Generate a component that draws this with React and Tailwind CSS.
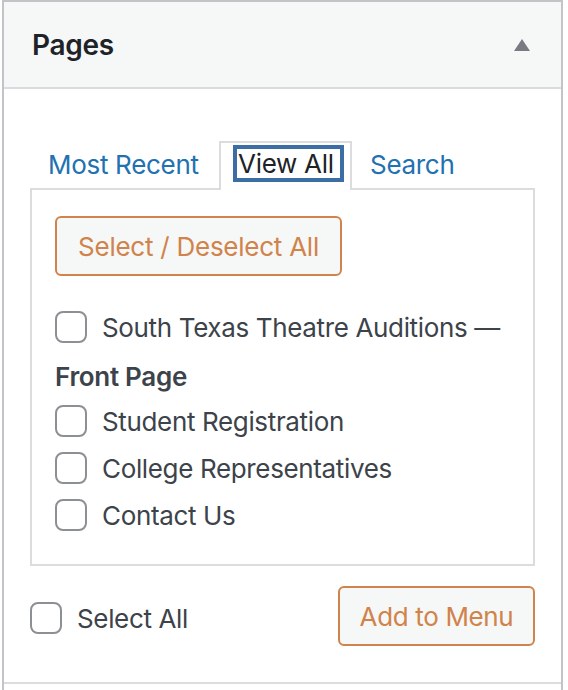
import React from "react";

function Checkbox({ className = "" }) {
  return (
    <span
      className={`block h-[32px] w-[32px] shrink-0 rounded-[8px] border-2 border-[#8c8f94] bg-white ${className}`}
    />
  );
}

function Row({ label, className = "" }) {
  return (
    <div className={`flex h-[32px] items-center ${className}`}>
      <Checkbox />
      <span className="ml-[15px] mt-[1px] whitespace-nowrap text-[26px] leading-none tracking-[-0.35px] text-[#3c434a]">
        {label}
      </span>
    </div>
  );
}

export default function App() {
  return (
    <div className="h-[690px] w-[568px] overflow-hidden bg-white font-[Inter,sans-serif]">
      <div className="ml-[2px] w-[561px] border-x-2 border-t-2 border-[#c3c4c7]">
        {/* Header */}
        <div className="flex h-[87px] items-center justify-between border-b-2 border-[#dcdcde] bg-[#f6f7f7] pl-[28px] pr-[31px]">
          <h2 className="text-[28px] font-semibold leading-normal tracking-[-0.3px] text-[#1d2327]">Pages</h2>
          <svg width="16" height="12" viewBox="0 0 16 12" aria-hidden="true">
            <polygon points="8,0 16,12 0,12" fill="#787c82" />
          </svg>
        </div>

        {/* Body */}
        <div className="border-b-2 border-[#dcdcde] px-[26px] pb-[36px] pt-[52px]">
          {/* Tabs */}
          <div className="flex items-start">
            <div className="w-[189px] pl-[18px] pt-[9px] text-[26px] leading-[29px] tracking-[-0.3px] text-[#2271b1]">
              Most Recent
            </div>
            <div className="relative z-10 -mb-[2px] h-[49px] w-[133px] border-x-2 border-t-2 border-[#dcdcde] bg-white pl-[12px] pr-[6px] pt-[2px]">
              <div className="h-[37px] w-[111px] whitespace-nowrap border-4 border-[#3b6ea5] pl-[1px] text-[26px] leading-[30px] tracking-[-0.3px] text-[#1d2327]">
                View All
              </div>
            </div>
            <div className="pl-[18px] pt-[9px] text-[26px] leading-[29px] tracking-[-0.3px] text-[#2271b1]">Search</div>
          </div>

          {/* Panel */}
          <div className="border-2 border-[#dcdcde] px-[23px] pb-[33px] pt-[26px]">
            <div className="flex h-[60px] w-[287px] items-center justify-center rounded-[6px] border-2 border-[#d0834a] bg-[#f6f7f7] text-[26px] tracking-[-0.25px] text-[#d0834a]">
              Select / Deselect All
            </div>
            <div className="mt-[35px]">
              <Row label="South Texas Theatre Auditions —" />
              <div className="mt-[18px] h-[32px] text-[26px] font-semibold leading-[32px] tracking-[-0.3px] text-[#3c434a]">
                Front Page
              </div>
              <Row label="Student Registration" className="mt-[12px]" />
              <Row label="College Representatives" className="mt-[15px]" />
              <Row label="Contact Us" className="mt-[15px]" />
            </div>
          </div>

          {/* Footer row */}
          <div className="mt-[20px] flex items-start justify-between">
            <div className="mt-[16px] flex h-[32px] items-center">
              <Checkbox />
              <span className="ml-[15px] mt-[1px] text-[26px] leading-none tracking-[-0.35px] text-[#3c434a]">Select All</span>
            </div>
            <div className="flex h-[60px] w-[197px] items-center justify-center rounded-[6px] border-2 border-[#d0834a] bg-[#f6f7f7] text-[26px] tracking-[-0.35px] text-[#d0834a]">
              Add to Menu
            </div>
          </div>
        </div>

        <div className="h-[12px]" />
      </div>
    </div>
  );
}
